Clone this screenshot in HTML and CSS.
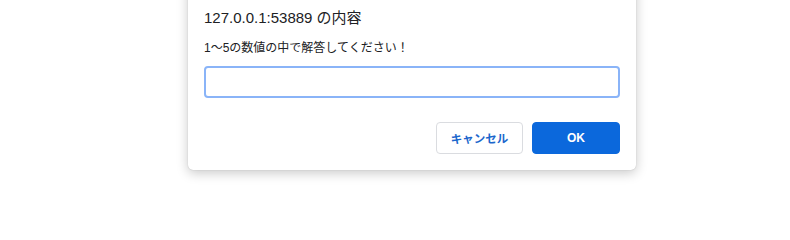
FILE: index.html
```html
<!DOCTYPE html>
<html lang="ja">
<head>
<meta charset="utf-8">
<link rel="stylesheet" href="styles.css">
</head>
<body>
<div class="dialog">
  <div class="title">127.0.0.1:53889 の内容</div>
  <div class="message">1〜5の数値の中で解答してください！</div>
  <input class="field" type="text">
  <div class="actions">
    <button class="btn cancel">キャンセル</button>
    <button class="btn ok">OK</button>
  </div>
</div>
</body>
</html>
```
FILE: styles.css
```css
html {
  height: 200px;
  overflow: hidden;
  background: #ffffff;
}
body {
  margin: 0;
  padding: 0;
  height: 200px;
  font-family: "Liberation Sans", "Noto Sans CJK JP", sans-serif;
  color: #202124;
}
.dialog {
  box-sizing: border-box;
  width: 448px;
  margin: -20px 0 0 188px;
  padding: 28px 16px 16px;
  background: #ffffff;
  border-radius: 5px;
  box-shadow: 0 3px 12px rgba(0, 0, 0, 0.22), 0 0 1px rgba(0, 0, 0, 0.25);
  display: flex;
  flex-direction: column;
}
.title {
  font-size: 15px;
  line-height: 20px;
  color: #202124;
}
.message {
  margin-top: 12px;
  font-size: 12px;
  line-height: 16px;
  color: #202124;
}
.field {
  box-sizing: border-box;
  margin: 10px 0 0;
  width: 416px;
  height: 32px;
  border: 2px solid #8ab4f8;
  border-radius: 4px;
  outline: none;
  padding: 0 6px;
  font-size: 13px;
  background: #fff;
}
.actions {
  margin-top: 24px;
  display: flex;
  justify-content: flex-end;
  gap: 9px;
}
.btn {
  box-sizing: border-box;
  height: 32px;
  border-radius: 4px;
  font-family: "Liberation Sans", "Noto Sans CJK JP", sans-serif;
  font-size: 12px;
  font-weight: bold;
  padding: 0;
  cursor: pointer;
}
.cancel {
  width: 87px;
  background: #ffffff;
  border: 1px solid #dadce0;
  color: #1a66cc;
  font-size: 11.5px;
}
.ok {
  width: 88px;
  background: #0b68dc;
  border: 1px solid #0b68dc;
  color: #ffffff;
}
```
